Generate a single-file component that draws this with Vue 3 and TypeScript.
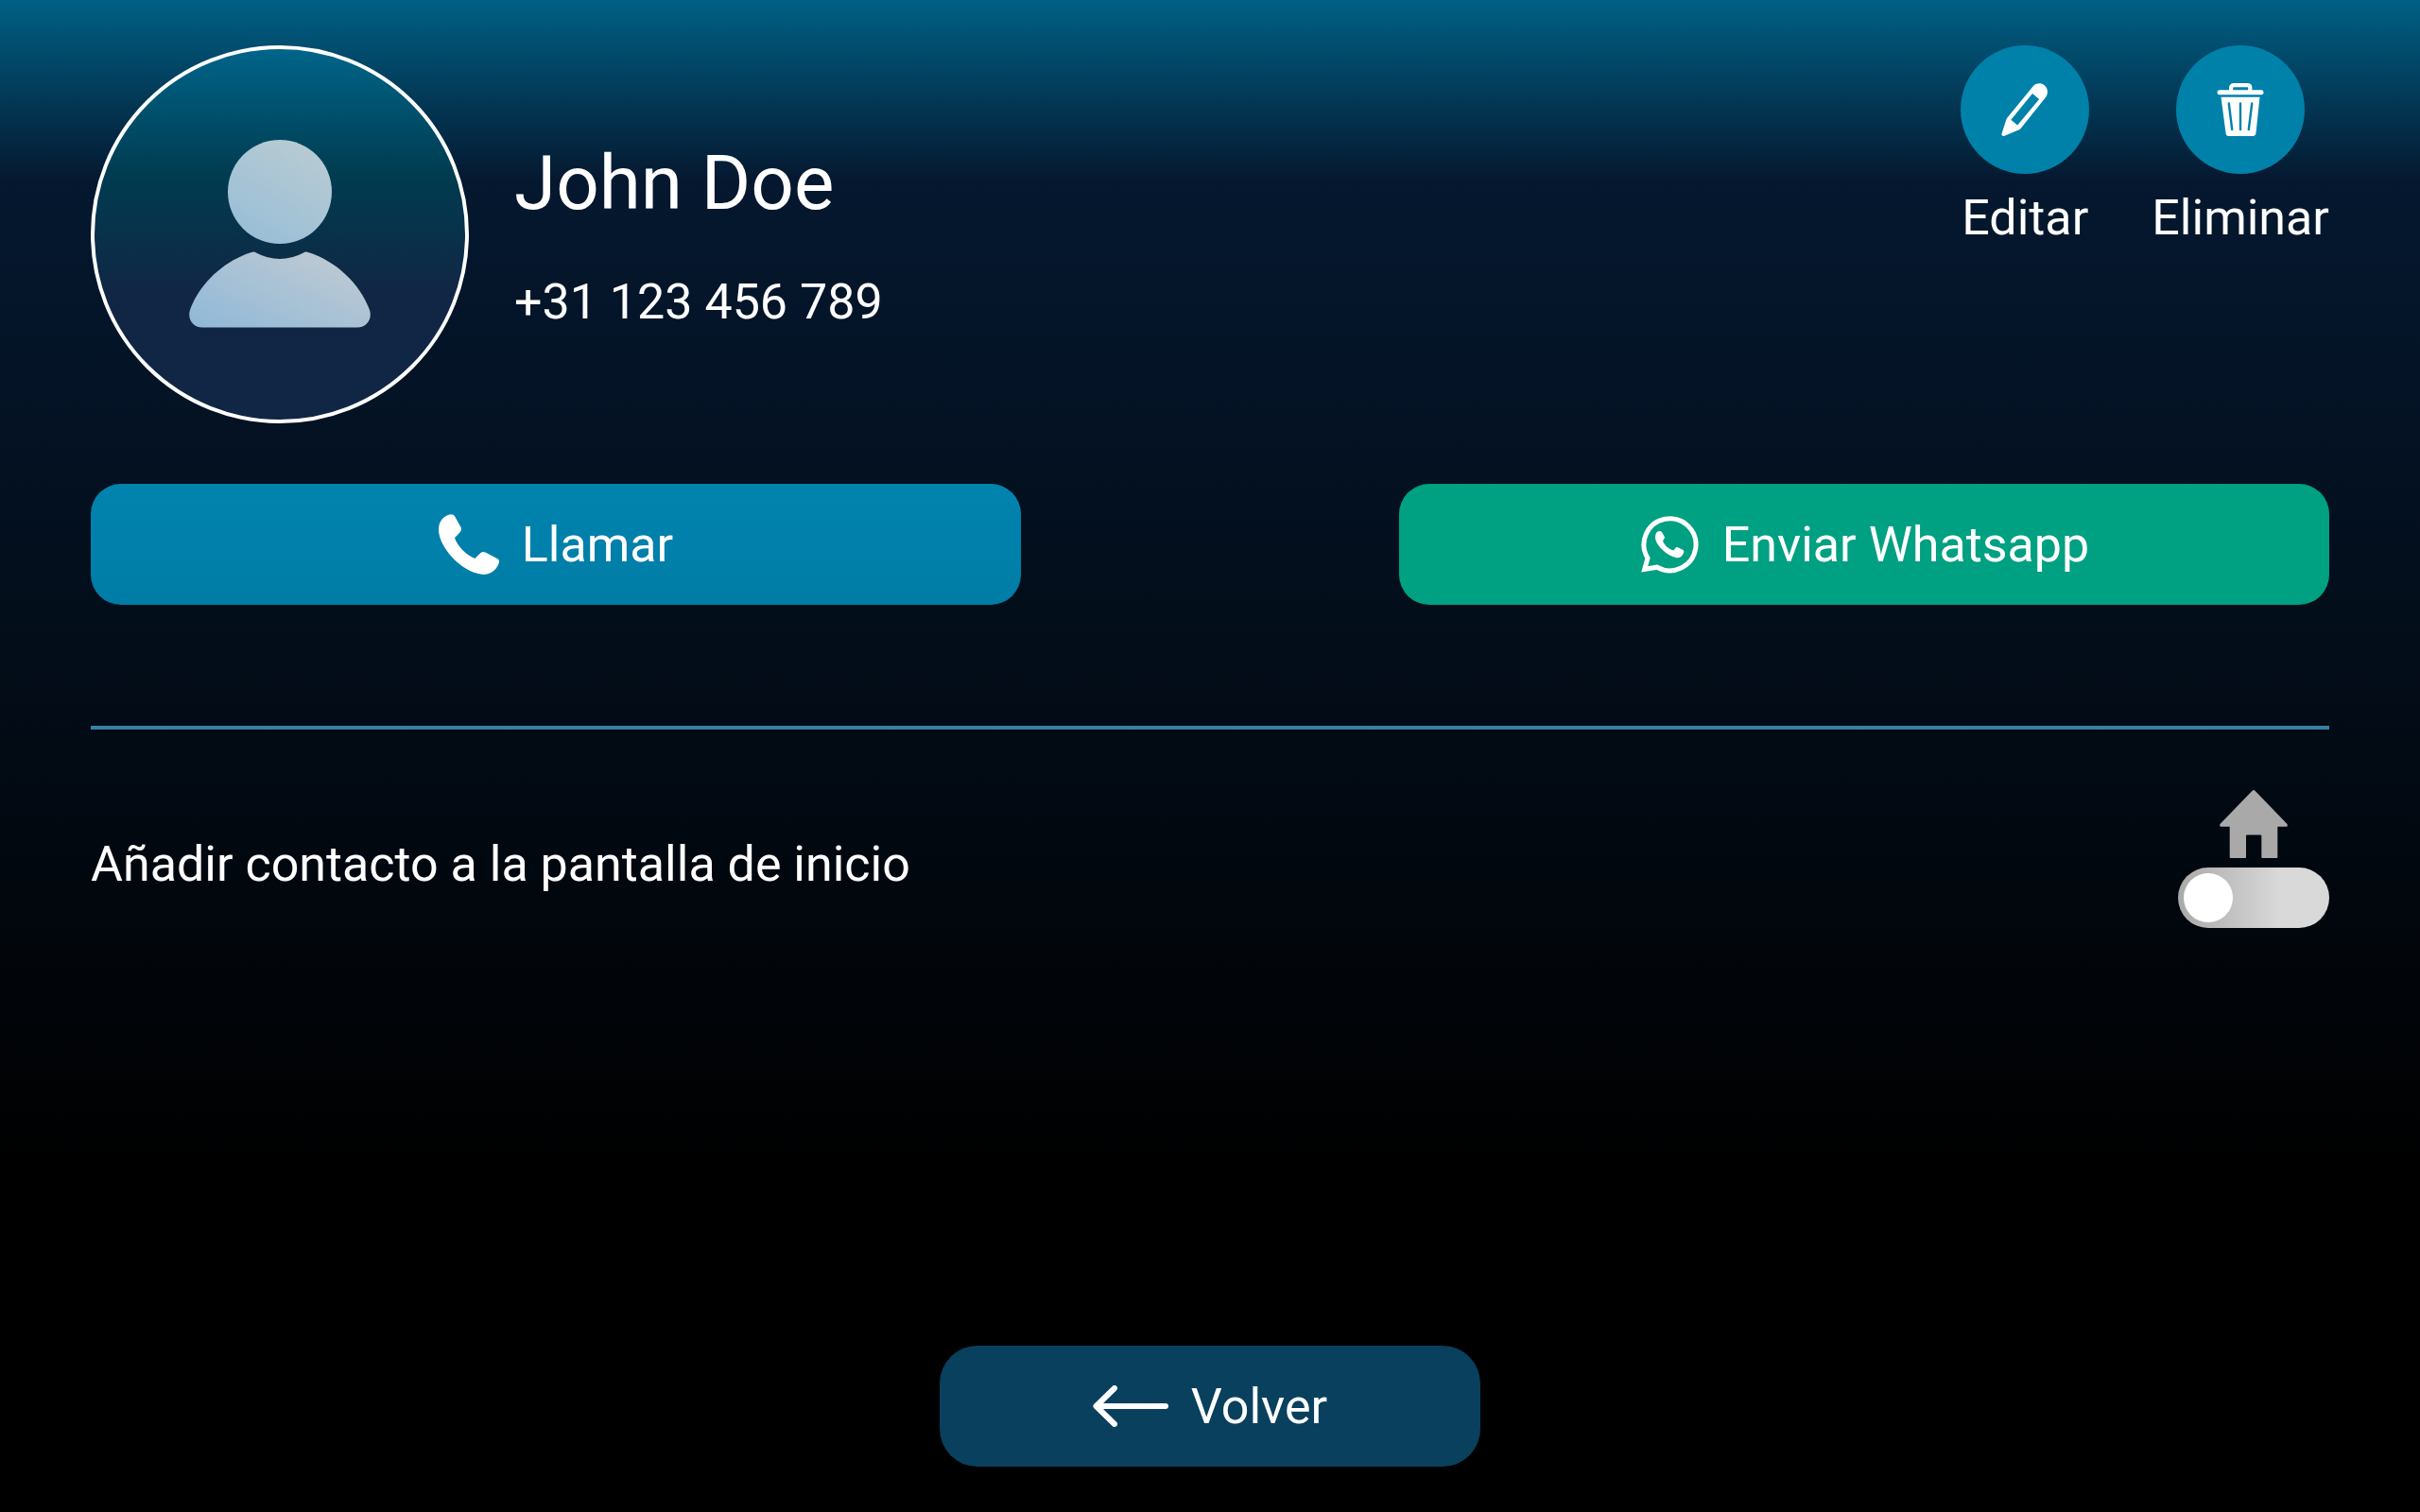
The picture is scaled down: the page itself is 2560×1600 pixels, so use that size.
<script setup lang="ts">
import { ref } from 'vue'

interface Contact {
  name: string
  phone: string
}

const contact: Contact = { name: 'John Doe', phone: '+31 123 456 789' }
const onHomeScreen = ref<boolean>(false)
</script>

<template>
  <main class="screen">
    <header class="profile">
      <svg class="avatar" viewBox="0 0 400 400" role="img" aria-label="Foto de contacto">
        <defs>
          <linearGradient id="avatar-bg" x1="0" y1="0" x2="0" y2="1">
            <stop offset="0" stop-color="#00658a" />
            <stop offset="0.34" stop-color="#003c50" />
            <stop offset="0.66" stop-color="#112644" />
            <stop offset="1" stop-color="#112644" />
          </linearGradient>
          <linearGradient id="head-fill" gradientUnits="userSpaceOnUse" x1="170" y1="205" x2="225" y2="110">
            <stop offset="0" stop-color="#99bed7" />
            <stop offset="1" stop-color="#b6cad3" />
          </linearGradient>
          <linearGradient id="body-fill" gradientUnits="userSpaceOnUse" x1="110" y1="298" x2="168" y2="179">
            <stop offset="0" stop-color="#90b9d8" />
            <stop offset="1" stop-color="#bdc9d3" />
          </linearGradient>
        </defs>
        <circle cx="200" cy="200" r="198" fill="url(#avatar-bg)" stroke="#fff" stroke-width="4" />
        <circle cx="200" cy="155" r="55" fill="url(#head-fill)" />
        <path
          fill="url(#body-fill)"
          d="M170 219Q173 218 175 219.500Q187 226 200 226Q213 226 225 219.500Q227 218 230 219C259 228 285 252 295 280C298 290 292 298.500 282 298.500H118C108 298.500 102 290 105 280C115 252 141 228 170 219Z"
        />
      </svg>
      <div class="identity">
        <h1 class="name">{{ contact.name }}</h1>
        <p class="phone">{{ contact.phone }}</p>
      </div>
      <div class="tools">
        <button type="button" class="tool">
          <span class="disc">
            <svg width="50" height="56" viewBox="0 0 49 56" aria-hidden="true">
              <path
                fill="#fff"
                fill-rule="evenodd"
                d="M33 3.500C36 -0.500 41.500 -0.800 45 2C49 5 49.500 11 46.500 15L20.500 47.500Q19.800 48.500 18.500 49.200L3 55.800C1 56.500 -0.300 55.500 0 53.500L4.800 38.500Q5 37.500 6 36.500ZM32.500 11L9.800 38.700L16.700 44.500L39.600 17Z"
              />
            </svg>
          </span>
          Editar
        </button>
        <button type="button" class="tool">
          <span class="disc">
            <svg width="50" height="56" viewBox="0 0 49 56" aria-hidden="true">
              <rect y="7.300" width="49" height="5" rx="2.500" fill="#fff" />
              <path d="M14.600 9V5Q14.600 2.200 17.500 2.200H32Q34.800 2.200 34.800 5V9" fill="none" stroke="#fff" stroke-width="4.200" />
              <path d="M4 14.700H45L41 52.500Q40.500 56 37.500 56H12Q9.300 56 9 52.500Z" fill="#fff" />
              <path d="M12.300 21.500L15.700 49M24.500 21.500V49M36.700 21.500L33.300 49" stroke="#0081aa" stroke-width="2.400" stroke-linecap="round" />
            </svg>
          </span>
          Eliminar
        </button>
      </div>
    </header>

    <div class="actions">
      <button type="button" class="action call">
        <svg width="64" height="64" viewBox="0 0 64 64" aria-hidden="true">
          <path
            fill="#fff"
            d="M10 1C13 -0.500 15.800 0 17 2.200L23.300 13.500C24.300 15.500 24.200 17.500 22.800 19L17 25.300C20 34 29 43.500 38.300 47L44 41.500C46 39.700 48 39.700 50 40.700L62.300 47.200C64 48.200 64.400 50 63.700 52C61 60 54 64 47.300 64C24 62 0 35 0 16.300C0 9 4 3 10 1Z"
          />
        </svg>
        Llamar
      </button>
      <button type="button" class="action whatsapp">
        <svg width="64" height="64" viewBox="-2 -2 64 64" aria-hidden="true">
          <path
            fill="none"
            stroke="#fff"
            stroke-width="5"
            d="M3.700 56.300L7 44.500A27.500 27.500 0 1 1 17 54.200Z"
          />
          <path
            fill="#fff"
            d="M17.500 16.500Q20.500 15.300 22 17L25 22.500Q25 23.500 23 26.500C25 31 29 35 34.200 36.500L36.500 33.800Q37.500 32.600 39.500 33.500L44.500 36Q45.500 36.700 45.200 38C44 43 40.500 44.800 37.500 44.200C27 42 17 32 15.200 24.500Q14.500 18.500 17.500 16.500Z"
          />
        </svg>
        Enviar Whatsapp
      </button>
    </div>

    <hr class="divider" />

    <div class="setting">
      <label for="home-toggle">Añadir contacto a la pantalla de inicio</label>
      <div class="home">
        <svg width="72" height="72" viewBox="0 0 72 72" aria-hidden="true">
          <path
            fill="#a9a9a9"
            d="M34.800 0.600Q36 -0.500 37.200 0.600L71.500 36Q72.500 38.500 70.500 38.700H61.300V71Q61.300 72 60.300 72H45.300Q44.300 72 44.300 71V48.500Q44.300 47.500 43.300 47.500H29Q28 47.500 28 48.500V71Q28 72 27 72H11.700Q10.700 72 10.700 71V38.700H1.500Q-0.500 38.500 0.500 36Z"
          />
        </svg>
        <input id="home-toggle" v-model="onHomeScreen" type="checkbox" class="toggle" />
      </div>
    </div>

    <footer class="footer">
      <button type="button" class="action back">
        <svg width="80" height="44" viewBox="0 0 80 44" aria-hidden="true">
          <path
            d="M77 22H4M23 3L3.500 22L23 41"
            fill="none"
            stroke="#fff"
            stroke-width="6"
            stroke-linecap="round"
            stroke-linejoin="round"
          />
        </svg>
        Volver
      </button>
    </footer>
  </main>
</template>

<style>
body {
  background: #000;
}
</style>

<style scoped>
.screen {
  box-sizing: border-box;
  min-height: 100vh;
  padding: 48px 96px;
  display: flex;
  flex-direction: column;
  background: linear-gradient(#006085 0%, #05182f 12%, #000 78%);
  color: #fff;
  font-family: Roboto, "Liberation Sans", sans-serif;
  font-size: 52px;
  line-height: 61px;
}

button {
  border: 0;
  padding: 0;
  background: none;
  color: inherit;
  font: inherit;
  cursor: pointer;
}

svg {
  display: block;
  flex: none;
}

.profile {
  display: flex;
  gap: 48px;
}

.avatar {
  width: 400px;
  height: 400px;
}

.identity {
  flex: 1;
  display: flex;
  flex-direction: column;
  justify-content: center;
  gap: 48px;
}

.name,
.phone {
  margin: 0;
  font-weight: 400;
}

.name {
  font-size: 80px;
  line-height: 94px;
}

.tools {
  display: flex;
  align-items: flex-start;
  gap: 66px;
}

.tool {
  display: flex;
  flex-direction: column;
  align-items: center;
  gap: 16px;
}

.disc {
  width: 136px;
  height: 136px;
  border-radius: 50%;
  display: flex;
  align-items: center;
  justify-content: center;
  background: #0081aa;
}

.actions {
  display: flex;
  gap: 400px;
  margin-top: 64px;
}

.action {
  height: 128px;
  border-radius: 32px;
  display: flex;
  align-items: center;
  justify-content: center;
  gap: 24px;
}

.actions .action {
  flex: 1;
}

.call {
  background: linear-gradient(#0083ad, #007da7);
}

.whatsapp {
  background: #00a082;
}

.divider {
  width: 100%;
  height: 4px;
  margin: 128px 0 0;
  border: 0;
  background: #377fa3;
}

.setting {
  display: flex;
  align-items: center;
  justify-content: space-between;
  margin-top: 64px;
}

.home {
  display: flex;
  flex-direction: column;
  align-items: center;
  gap: 10px;
  padding-bottom: 10px;
}

.toggle {
  appearance: none;
  box-sizing: border-box;
  width: 160px;
  height: 64px;
  margin: 0;
  padding: 6px;
  border-radius: 32px;
  display: flex;
  background: linear-gradient(90deg, #a9a9a9, #d9d9d9 68%);
  cursor: pointer;
}

.toggle::before {
  content: "";
  width: 52px;
  height: 52px;
  border-radius: 50%;
  background: #fff;
}

.toggle:checked {
  justify-content: flex-end;
  background: #0081aa;
}

.footer {
  display: flex;
  justify-content: center;
  margin-top: auto;
}

.back {
  width: 572px;
  border-radius: 40px;
  background: #08405d;
}
</style>
